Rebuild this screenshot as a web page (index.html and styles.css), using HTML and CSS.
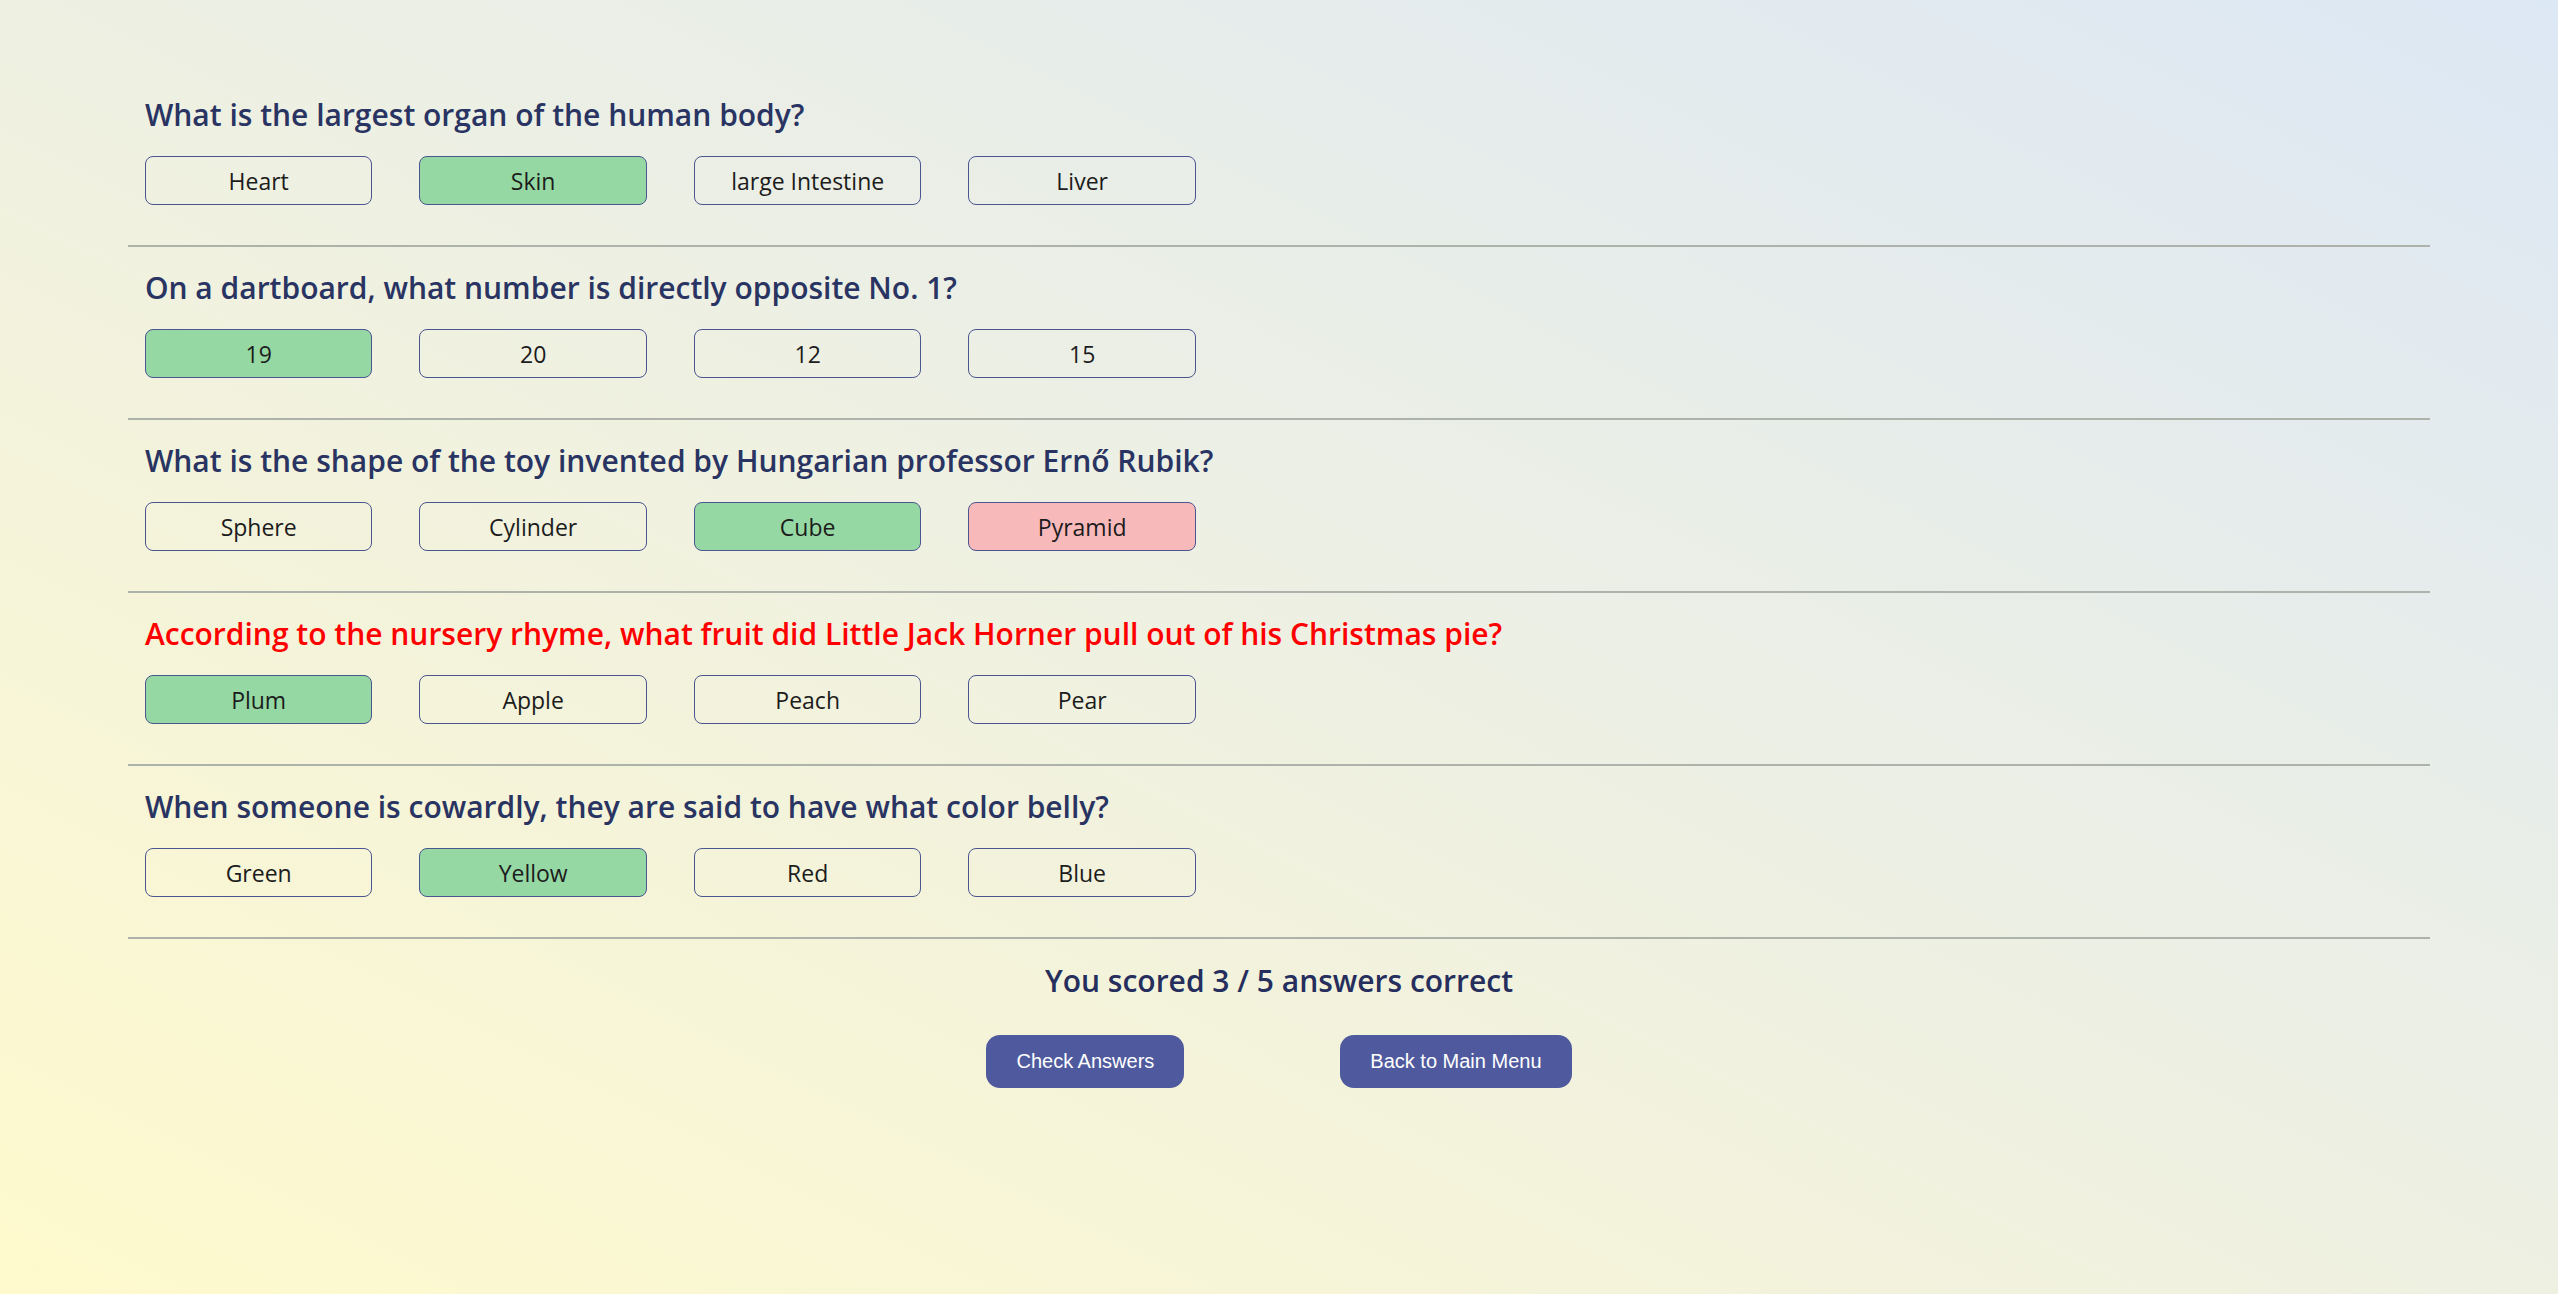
FILE: index.html
```html
<!DOCTYPE html>
<html lang="en">
<head>
<meta charset="utf-8">
<title>Quiz Results</title>
<link rel="stylesheet" href="styles.css">
</head>
<body>
<main class="quiz">
  <section class="question">
    <h2 class="q-title">What is the largest organ of the human body?</h2>
    <div class="answers">
      <button class="answer">Heart</button>
      <button class="answer correct">Skin</button>
      <button class="answer">large Intestine</button>
      <button class="answer">Liver</button>
    </div>
  </section>
  <hr class="divider">
  <section class="question">
    <h2 class="q-title">On a dartboard, what number is directly opposite No. 1?</h2>
    <div class="answers">
      <button class="answer correct">19</button>
      <button class="answer">20</button>
      <button class="answer">12</button>
      <button class="answer">15</button>
    </div>
  </section>
  <hr class="divider">
  <section class="question">
    <h2 class="q-title">What is the shape of the toy invented by Hungarian professor Ernő Rubik?</h2>
    <div class="answers">
      <button class="answer">Sphere</button>
      <button class="answer">Cylinder</button>
      <button class="answer correct">Cube</button>
      <button class="answer wrong">Pyramid</button>
    </div>
  </section>
  <hr class="divider">
  <section class="question">
    <h2 class="q-title unanswered">According to the nursery rhyme, what fruit did Little Jack Horner pull out of his Christmas pie?</h2>
    <div class="answers">
      <button class="answer correct">Plum</button>
      <button class="answer">Apple</button>
      <button class="answer">Peach</button>
      <button class="answer">Pear</button>
    </div>
  </section>
  <hr class="divider">
  <section class="question">
    <h2 class="q-title">When someone is cowardly, they are said to have what color belly?</h2>
    <div class="answers">
      <button class="answer">Green</button>
      <button class="answer correct">Yellow</button>
      <button class="answer">Red</button>
      <button class="answer">Blue</button>
    </div>
  </section>
  <hr class="divider">
  <footer class="results">
    <p class="score">You scored 3 / 5 answers correct</p>
    <div class="actions">
      <button class="action">Check Answers</button>
      <button class="action">Back to Main Menu</button>
    </div>
  </footer>
</main>
</body>
</html>
```
FILE: styles.css
```css
html, body {
  margin: 0;
  padding: 0;
}
body {
  min-height: 1294px;
  background: linear-gradient(to top right, #fffacd 0%, #eef0e2 50%, #dde8f5 100%);
  font-family: "Open Sans", "Noto Sans", sans-serif;
}
.quiz {
  width: 90%;
  margin: 0 auto;
  padding-top: 74px;
}
.question {
  padding: 23px 17px 40px;
}
.q-title {
  margin: 0 0 23px;
  font-size: 30px;
  line-height: 36px;
  font-weight: 600;
  color: #293462;
}
.q-title.unanswered {
  color: #ff0000;
}
.answers {
  display: flex;
  gap: 47px;
}
.answer {
  width: 227.5px;
  height: 49px;
  box-sizing: border-box;
  border: 1px solid #4b5590;
  border-radius: 8px;
  background: transparent;
  font-family: "Open Sans", "Noto Sans", sans-serif;
  font-size: 23px;
  color: #1c1c1c;
  padding: 0;
}
.answer.correct {
  background: #95d8a3;
}
.answer.wrong {
  background: #f8b9bb;
}
.divider {
  margin: 0;
  border: 0;
  height: 2px;
  background: #adb2aa;
}
.results {
  padding-top: 24px;
  text-align: center;
}
.score {
  margin: 0;
  font-size: 30px;
  line-height: 36px;
  font-weight: 600;
  color: #252e5c;
}
.actions {
  display: flex;
  justify-content: center;
  gap: 156px;
  margin-top: 36px;
}
.action {
  height: 53px;
  padding: 0 30px;
  border: 0;
  border-radius: 14px;
  background: #4f5a9e;
  color: #ffffff;
  font-family: "Liberation Sans", Arial, sans-serif;
  font-size: 20px;
}
```
